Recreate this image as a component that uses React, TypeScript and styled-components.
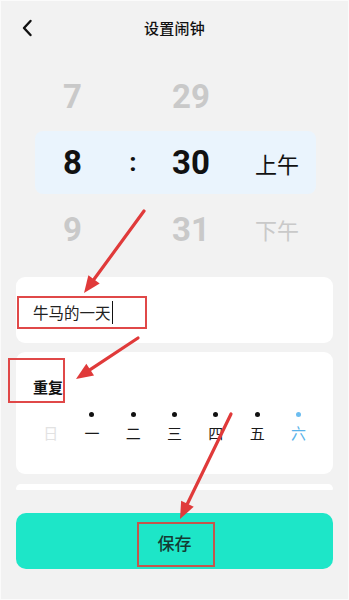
import styled, { createGlobalStyle } from 'styled-components'

const GlobalStyle = createGlobalStyle`
    html, body {
        margin: 0;
        padding: 0;
        background: #f2f2f2;
    }
    * {
        box-sizing: border-box;
    }
`;

const Screen = styled.div`
    position: relative;
    width: 349px;
    height: 600px;
    overflow: hidden;
    background: #f2f2f2;
    border: 1px solid #fbfbfb;
    font-family: Roboto, "Noto Sans CJK SC", sans-serif;
    color: #111;
`;

const Header = styled.header`
    position: relative;
    height: 54px;
    display: flex;
    align-items: center;
    justify-content: center;
    padding-bottom: 1px;
`;

const BackButton = styled.button`
    position: absolute;
    left: 15px;
    top: 15px;
    width: 22px;
    height: 24px;
    padding: 0;
    border: 0;
    background: none;
    display: flex;
    align-items: center;
    justify-content: center;
`;

const Title = styled.h1`
    margin: 0;
    font-size: 15px;
    font-weight: 500;
    letter-spacing: 0.3px;
`;

const Wheel = styled.div`
    padding: 8px 32px 0 34px;
    display: flex;
    flex-direction: column;
`;

const WheelRow = styled.div<{ $active?: boolean; $h: number; $mt?: number }>`
    display: grid;
    grid-template-columns: 75px 46px 70px 92px;
    align-items: center;
    height: ${p => p.$h}px;
    margin-top: ${p => p.$mt ?? 0}px;
    border-radius: 8px;
    background: ${p => (p.$active ? '#eaf4fd' : 'transparent')};
    color: ${p => (p.$active ? '#111' : '#c9c9c9')};
`;

const Num = styled.span`
    text-align: center;
    font-size: 33px;
    font-weight: 700;
`;

const Colon = styled.span`
    text-align: center;
    font-size: 26px;
    font-weight: 700;
    padding-bottom: 2px;
`;

const Meridiem = styled.span`
    text-align: center;
    padding-left: 10px;
    font-size: 22px;
    font-weight: 400;
`;

const Content = styled.div`
    padding: 13px 15px 0 15px;
    display: flex;
    flex-direction: column;
    gap: 9px;
`;

const Card = styled.div`
    background: #fff;
    border-radius: 9px;
`;

const NameCard = styled(Card)`
    height: 66px;
    display: flex;
    align-items: center;
    padding: 4px 0 0 17px;
    font-size: 15.5px;
    font-family: "Noto Sans CJK SC", sans-serif;
    color: #222;
`;

const Caret = styled.span`
    display: inline-block;
    width: 1.5px;
    height: 23px;
    margin-left: 1px;
    background: #111;
`;

const RepeatCard = styled(Card)`
    height: 122px;
    padding: 24px 0 0 14px;
`;

const RepeatLabel = styled.div`
    padding-left: 3px;
    font-family: "Noto Sans CJK SC", sans-serif;
    font-size: 15px;
    font-weight: 700;
    line-height: 22px;
`;

const Days = styled.div`
    margin-top: 14px;
    display: grid;
    grid-template-columns: repeat(7, 41.3px);
`;

const Day = styled.div<{ $state: 'off' | 'on' | 'today' }>`
    display: flex;
    flex-direction: column;
    align-items: center;
    font-family: "Noto Sans CJK SC", sans-serif;
    font-size: 15px;
    line-height: 20px;
    color: ${p => (p.$state === 'off' ? '#e2e2e2' : p.$state === 'today' ? '#5ab3ea' : '#1a1a1a')};

    i {
        width: 5px;
        height: 5px;
        border-radius: 50%;
        margin-bottom: 6px;
        background: ${p => (p.$state === 'off' ? 'transparent' : p.$state === 'today' ? '#6cbdf0' : '#111')};
    }
`;

const PeekCard = styled.div`
    height: 6px;
    margin-top: 1px;
    background: #fff;
    border-radius: 8px 8px 2px 2px;
`;

const SaveButton = styled.button`
    margin: 23px 15px 0 15px;
    height: 56px;
    width: calc(100% - 30px);
    border: 0;
    border-radius: 10px;
    background: #1de6c8;
    font-family: "Noto Sans CJK SC", sans-serif;
    font-size: 17px;
    font-weight: 500;
    color: #143b33;
    display: flex;
    align-items: center;
    justify-content: center;
    padding-top: 3px;
`;

const Annotations = styled.svg`
    position: absolute;
    left: 0;
    top: 0;
    pointer-events: none;
`;

const days: { label: string; state: 'off' | 'on' | 'today' }[] = [
    { label: '日', state: 'off' },
    { label: '一', state: 'on' },
    { label: '二', state: 'on' },
    { label: '三', state: 'on' },
    { label: '四', state: 'on' },
    { label: '五', state: 'on' },
    { label: '六', state: 'today' },
];

// arrow from (x1,y1) to tip (x2,y2)
const Arrow = ({ x1, y1, x2, y2 }: { x1: number; y1: number; x2: number; y2: number }) => {
    const a = Math.atan2(y2 - y1, x2 - x1);
    const len = 17;
    const half = 7;
    const bx = x2 - Math.cos(a) * len;
    const by = y2 - Math.sin(a) * len;
    const px = -Math.sin(a) * half;
    const py = Math.cos(a) * half;
    return (
        <g>
            <line x1={x1} y1={y1} x2={bx} y2={by} stroke="#e03a3a" strokeWidth="3.2" strokeLinecap="round" />
            <polygon points={`${x2},${y2} ${bx + px},${by + py} ${bx - px},${by - py}`} fill="#e03a3a" />
        </g>
    );
};

const App = () => {
    return (
        <>
            <GlobalStyle />
            <Screen>
                <Header>
                    <BackButton aria-label="back">
                        <svg width="12" height="18" viewBox="0 0 12 18">
                            <path d="M9.5 2 L3 9 L9.5 16" fill="none" stroke="#111" strokeWidth="2.4" strokeLinecap="round" strokeLinejoin="round" />
                        </svg>
                    </BackButton>
                    <Title>设置闹钟</Title>
                </Header>

                <Wheel>
                    <WheelRow $h={66}>
                        <Num>7</Num>
                        <span />
                        <Num>29</Num>
                        <span />
                    </WheelRow>
                    <WheelRow $h={63} $mt={2} $active>
                        <Num>8</Num>
                        <Colon>:</Colon>
                        <Num>30</Num>
                        <Meridiem>上午</Meridiem>
                    </WheelRow>
                    <WheelRow $h={70}>
                        <Num>9</Num>
                        <span />
                        <Num>31</Num>
                        <Meridiem>下午</Meridiem>
                    </WheelRow>
                </Wheel>

                <Content>
                    <NameCard>
                        牛马的一天<Caret />
                    </NameCard>
                    <RepeatCard>
                        <RepeatLabel>重复</RepeatLabel>
                        <Days>
                            {days.map(d => (
                                <Day key={d.label} $state={d.state}>
                                    <i />
                                    {d.label}
                                </Day>
                            ))}
                        </Days>
                    </RepeatCard>
                    <PeekCard />
                </Content>

                <SaveButton>保存</SaveButton>

                <Annotations width="349" height="600" viewBox="0 0 349 600">
                    <rect x="17" y="296" width="128" height="31" fill="none" stroke="#e04848" strokeWidth="2" />
                    <rect x="8" y="358" width="55" height="43" fill="none" stroke="#e04848" strokeWidth="2" />
                    <rect x="137" y="522" width="76" height="43" fill="none" stroke="#c4564c" strokeWidth="2" />
                    <Arrow x1={143} y1={210} x2={83} y2={292} />
                    <Arrow x1={137} y1={337} x2={75} y2={378} />
                    <Arrow x1={230} y1={413} x2={179} y2={518} />
                </Annotations>
            </Screen>
        </>
    );
};

export default App;
